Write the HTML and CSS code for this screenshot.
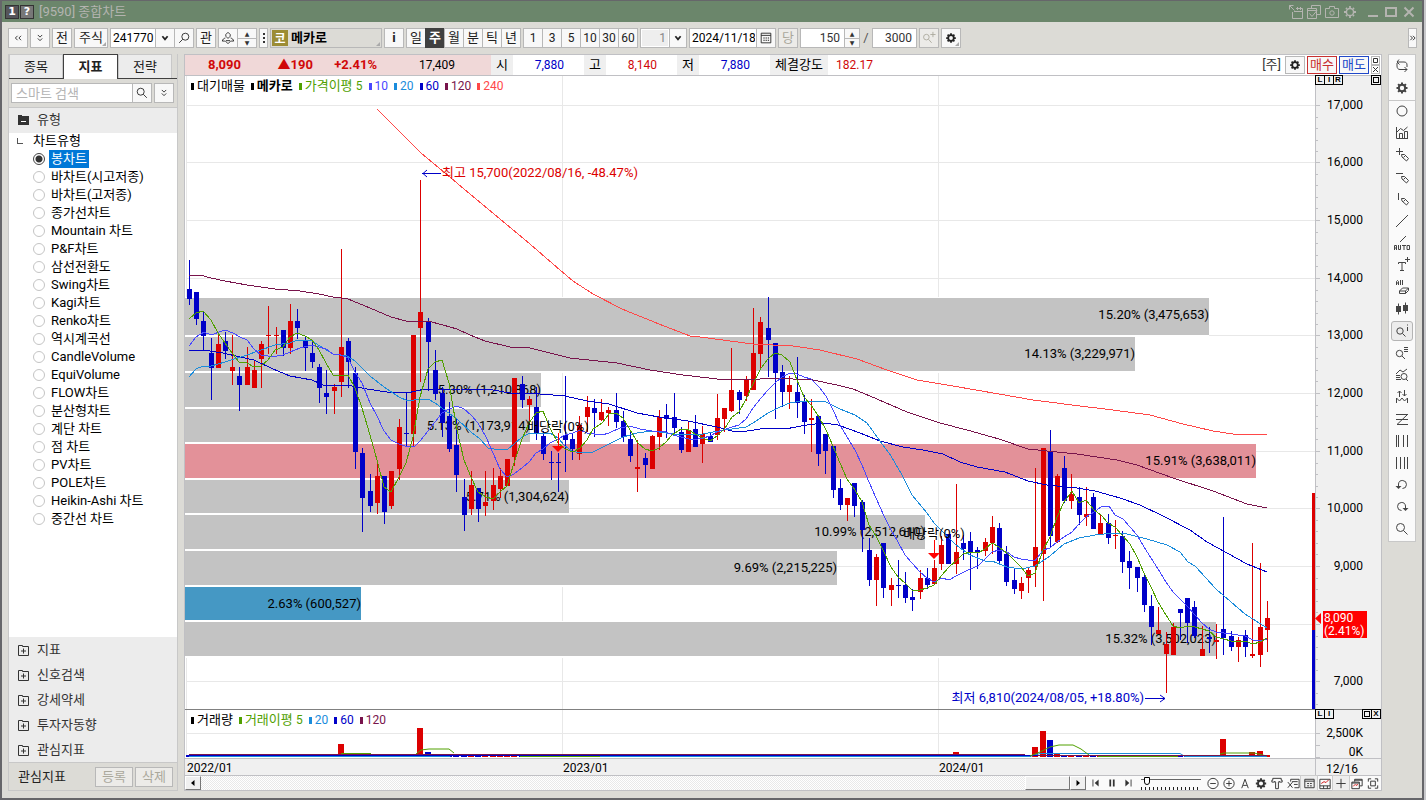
FILE: index.html
```html
<!DOCTYPE html>
<html lang="ko">
<head>
<meta charset="utf-8">
<title>[9590] 종합차트</title>
<link rel="stylesheet" href="styles.css">
</head>
<body>
<svg class="defs" aria-hidden="true">
  <symbol id="gear" viewBox="0 0 16 16"><circle cx="8" cy="8" r="3.2" fill="none" stroke="currentColor" stroke-width="2"/><path d="M8 2.500v2M8 11.500v2M2.500 8h2M11.500 8h2M4.100 4.100l1.400 1.400M10.500 10.500l1.400 1.400M4.100 11.900l1.400-1.400M10.500 5.500l1.400-1.400" stroke="currentColor" stroke-width="2" fill="none"/></symbol>
  <symbol id="gear-thin" viewBox="0 0 16 16"><circle cx="8" cy="8" r="3.600" fill="none" stroke="currentColor" stroke-width="1.500"/><path d="M8 2v2M8 12v2M2 8h2M12 8h2M4 4l1 1M11 11l1 1M4 12l1-1M11 5l1-1" stroke="currentColor" stroke-width="1.800" fill="none"/></symbol>
  <symbol id="search" viewBox="0 0 16 16"><path d="M9.500 9.500l4 4" class="ln"/><circle cx="6.500" cy="6.500" r="4" class="ln"/></symbol>
  <symbol id="search-left" viewBox="0 0 16 16"><path d="M6.500 9.500l-4 4" class="ln"/><circle cx="9.500" cy="6.500" r="4" class="ln"/></symbol>
  <symbol id="search-plus" viewBox="0 0 16 16"><path d="M7.500 9.500l3.500 4M12.500 1v6M9.500 4h6" class="ln"/><circle cx="5" cy="7" r="3.200" class="ln"/></symbol>
  <symbol id="dbl-down" viewBox="0 0 16 16"><path d="M5.500 4.500L8 7l2.500-2.500M5.500 8.500L8 11l2.500-2.500" class="ln"/></symbol>
  <symbol id="dbl-left" viewBox="0 0 16 16"><path d="M7.500 5.500L5 8l2.500 2.500M11.500 5.500L9 8l2.500 2.500" class="ln"/></symbol>
  <symbol id="dbl-right" viewBox="0 0 8 16"><path d="M1.500 5.500L4 8l-2.500 2.500M4.500 5.500L7 8l-2.500 2.500" class="ln"/></symbol>
  <symbol id="chev" viewBox="0 0 16 16"><path d="M5 6l3 3.500L11 6" fill="none" stroke="currentColor" stroke-width="2"/></symbol>
  <symbol id="person" viewBox="0 0 16 16"><path d="M8 1.500l2.500 2.500v2L8 8.500 5.500 6V4zM5 8c-2 .5-3 1.500-3.500 3.500h3M11 8c2 .5 3 1.500 3.500 3.500h-3M5 11.500l3 3 3-3M5.500 11h5" class="ln"/></symbol>
  <symbol id="calendar" viewBox="0 0 16 16"><path d="M2.500 2.500h11v11h-11zM2.500 5h11" class="ln"/><path d="M5 8h1.500M7.500 8H9M10 8h1.500M5 10.500h1.500M7.500 10.500H9M10 10.500h1.500" stroke="currentColor" stroke-width="1.200"/></symbol>
  <symbol id="folder-minus" viewBox="0 0 16 16"><path d="M3 3h4v1h7v9H3z" fill="currentColor"/><path d="M6 9.500h5" stroke="#fff"/></symbol>
  <symbol id="folder-plus" viewBox="0 0 16 16"><path d="M3.500 3.500h4v1h6v9h-10zM8.500 6.500v5M6 9h5" class="ln"/></symbol>
  <symbol id="export" viewBox="0 0 16 16"><path d="M4.500 8v6.500h10v-10H8M6 7.500h8M9.500 3v3M12.500 3v3M1.500 1.500l5 5M1.500 5.500v-4h4" class="lw"/></symbol>
  <symbol id="windows" viewBox="0 0 16 16"><path d="M1.500 4.500h9v10h-9zM5.500 4V1.500h9v9H11M1.500 6.500h9M3.500 9.500l2.500 3 5-6" class="lw"/></symbol>
  <symbol id="camera" viewBox="0 0 16 16"><path d="M2 4.500h3.500v-2h5v2H14.500v9H1.500v-9z" class="lw"/><circle cx="8" cy="9" r="2.200" class="lw"/></symbol>
  <symbol id="loop" viewBox="0 0 16 16"><path d="M5 1.500L3 4l2.500 2.500M3 4h7c2 0 3 1 3 3v2M3 5v3c0 2 1 3.500 3 3.500h7M10.500 9l2.500 2.500L10.500 14" class="ln"/></symbol>
  <symbol id="circle" viewBox="0 0 16 16"><circle cx="8" cy="8" r="5" class="ln"/></symbol>
  <symbol id="chartbars" viewBox="0 0 16 16"><path d="M2.500 2v11.500H14M5.500 13V8.500h3V13M10.500 13V6.500h3V13M2.500 7.500l4-4 3 2 4-3.500" class="ln"/></symbol>
  <symbol id="pen" viewBox="0 0 16 16"><path d="M7.500 7.500h3l4 4-2 2.500-4.500-4zM9.500 10.500l2-2" class="ln"/></symbol>
  <symbol id="pen-plus" viewBox="0 0 16 16"><path d="M5.500 1v7M2 4.500h7" class="ln"/><use href="#pen"/></symbol>
  <symbol id="pen-h" viewBox="0 0 16 16"><path d="M2 4.500h7" class="ln"/><use href="#pen"/></symbol>
  <symbol id="pen-v" viewBox="0 0 16 16"><path d="M4.500 2v7" class="ln"/><use href="#pen"/></symbol>
  <symbol id="line" viewBox="0 0 16 16"><path d="M2 14L14 2" class="ln"/></symbol>
  <symbol id="auto" viewBox="0 0 16 16"><path d="M6 7l6-6M.5 15v-4.500h2V15M.5 13h2M4.500 10v4.500h2V10M8 10.500h4M10 10.500V15M13 10.500h2.500v4H13z" class="ln"/></symbol>
  <symbol id="textplus" viewBox="0 0 16 16"><path d="M4.500 7V5.500h7V7M8 5.500v8M6 13.500h4M13.500 0v5M11 2.500h5" class="ln"/></symbol>
  <symbol id="all" viewBox="0 0 16 16"><path d="M2.500 6V2.500l1-1 1 1V6M2.500 4h2M6.500 1v5M8.500 1v5M5.500 12l3-3h6l-3 3zM5.500 12v2.500h6V12M11.500 14.500l3-3V9" class="ln"/></symbol>
  <symbol id="candles" viewBox="0 0 16 16"><path d="M2 5h5v6H2zM9 4h5v6H9z" fill="currentColor"/><path d="M4.500 2.500v11M11.500 1.500v11" class="ln"/></symbol>
  <symbol id="search-i" viewBox="0 0 16 16"><circle cx="6" cy="8" r="3.200" class="ln"/><path d="M8.500 10.500l3 3M13.500 4v4M13.500 1.500v1" class="ln"/></symbol>
  <symbol id="search-list" viewBox="0 0 16 16"><circle cx="5.500" cy="8.500" r="3.200" class="ln"/><path d="M8 11l3 3M10 2.500h4M10 4.500h4M10 6.500h4" class="ln"/></symbol>
  <symbol id="search-chart" viewBox="0 0 16 16"><path d="M2 7l4-4 3 2 4-3M2 8.500h4M2 10.500h4M2 12.500h5M12 12l2 2" class="ln"/><circle cx="10" cy="9.500" r="3" class="ln"/></symbol>
  <symbol id="peaks" viewBox="0 0 16 16"><path d="M2.500 14V9l3 3 2.500-3 2.500 3 3-3v5M5.500 8V2M3.500 4l2-2 2 2M10.500 1v6M8.500 5l2 2 2-2" class="ln"/></symbol>
  <symbol id="zlines" viewBox="0 0 16 16"><path d="M2 3.500h12M13.500 3.500L3 13.500M2 8.500h12M3 13.500h11" class="ln"/></symbol>
  <symbol id="vbars3" viewBox="0 0 16 16"><path d="M2.500 2v12M4.500 2v12M9.500 2v12M13.500 2v12" class="ln"/></symbol>
  <symbol id="vbars4" viewBox="0 0 16 16"><path d="M2.500 2v12M6.500 2v12M10.500 2v12M13.500 2v12" class="ln"/></symbol>
  <symbol id="undo" viewBox="0 0 16 16"><path d="M4.500 9V7a4 4 0 1 1 4 4.500" class="ln"/><path d="M1.500 9h6l-3 3z" fill="currentColor"/></symbol>
  <symbol id="redo" viewBox="0 0 16 16"><path d="M11.500 9V7a4 4 0 1 0-4 4.500" class="ln"/><path d="M8.500 9h6l-3 3z" fill="currentColor"/></symbol>
  <symbol id="minus-c" viewBox="0 0 16 16"><circle cx="8" cy="8" r="5.500" class="ln"/><path d="M5 8h6" class="ln"/></symbol>
  <symbol id="plus-c" viewBox="0 0 16 16"><circle cx="8" cy="8" r="5.500" class="ln"/><path d="M5 8h6M8 5v6" class="ln"/></symbol>
  <symbol id="letter-a" viewBox="0 0 16 16"><path d="M4.500 13L8 3.500l3.500 9.500M6 10h4" class="ln"/></symbol>
  <symbol id="tool" viewBox="0 0 16 16"><path d="M3.500 2.500h9v2h1v2h-3v-1l-1 1v7h-3v-7l-1-1v1h-3v-2h1z" class="ln"/></symbol>
  <symbol id="xlist" viewBox="0 0 16 16"><path d="M5.500 6V3.500h9v9h-5M7 6h6M9 9h4M2.500 6.500l5 6M7.500 6.500l-5 6" class="ln"/></symbol>
  <symbol id="table" viewBox="0 0 16 16"><path d="M3.500 3.500h10v9h-10zM3.500 5.500h10M6 8h2M9 8h2M6 10.500h2M9 10.500h2" class="ln"/></symbol>
  <symbol id="redchart" viewBox="0 0 16 16"><path d="M2.500 3.500h11v10h-11zM2.500 10.500h11M6.500 10.500v3M10.500 10.500v3" class="ln"/><path d="M4 8l3-2 2 1 3-3" stroke="#d01010" fill="none"/></symbol>
  <symbol id="plus" viewBox="0 0 16 16"><path d="M8 3v10M3 8h10" class="ln"/></symbol>
  <symbol id="stack" viewBox="0 0 16 16"><path d="M2.500 6.500h8v7h-8zM5.500 6V3.500h8v7H11M2.500 7.500h8M5.500 4.500h8" class="ln"/><path d="M4 11l2-2 1 1 2-1" stroke="#d01010" fill="none"/></symbol>
  <symbol id="expand" viewBox="0 0 16 16"><path d="M5.500 5.500h5v5h-5zM3 6V3h3M10 3h3v3M13 10v3h-3M6 13H3v-3" class="ln"/></symbol>
</svg>

<div class="window">
  <header class="titlebar">
    <span class="badge">1</span><span class="badge help">?</span>
    <span class="title">[9590] 종합차트</span>
    <span class="grow"></span>
    <button aria-label="내보내기"><svg><use href="#export"/></svg></button>
    <button aria-label="창 선택"><svg><use href="#windows"/></svg></button>
    <button aria-label="캡처"><svg><use href="#camera"/></svg></button>
    <button class="cfg" aria-label="설정"><svg><use href="#gear-thin"/></svg></button>
    <button aria-label="최소화"><i class="w-min"></i></button>
    <button aria-label="최대화"><i class="w-max"></i></button>
    <button aria-label="닫기"><svg><path d="M3.500 3.500l9 9M12.500 3.500l-9 9" stroke="currentColor" stroke-width="2"/></svg></button>
  </header>

  <div class="toolbar">
    <button class="b" aria-label="이전"><svg><use href="#dbl-left"/></svg></button>
    <button class="b" aria-label="펼치기"><svg><use href="#dbl-down"/></svg></button>
    <button class="b">전</button>
    <button class="b w34 corner">주식</button>
    <div class="group"><input class="w46" aria-label="종목코드" value="241770"><button class="b" aria-label="목록"><svg><use href="#chev"/></svg></button><button class="b" aria-label="검색"><svg><use href="#search-left"/></svg></button></div>
    <button class="b">관</button>
    <div class="group"><button class="b" aria-label="승계"><svg><use href="#person"/></svg></button><span class="spin w20"><button aria-label="위">▲</button><button aria-label="아래">▼</button></span></div>
    <button class="b w9" aria-label="더보기"><i class="dots"></i></button>
    <div class="name corner"><em>코</em><strong>메카로</strong></div>
    <button class="b"><strong>i</strong></button>
    <div class="group periods"><button class="b">일</button><button class="b on">주</button><button class="b">월</button><button class="b">분</button><button class="b">틱</button><button class="b">년</button></div>
    <div class="group n"><button class="b">1</button><button class="b">3</button><button class="b">5</button><button class="b">10</button><button class="b">30</button><button class="b">60</button></div>
    <div class="group"><input class="w30 off" aria-label="간격" value="1" disabled><button class="b w17" aria-label="간격 목록"><svg><use href="#chev"/></svg></button></div>
    <div class="group"><input class="w68" aria-label="날짜" value="2024/11/18"><button class="b" aria-label="달력"><svg><use href="#calendar"/></svg></button></div>
    <button class="b dim">당</button>
    <div class="group"><input class="w45 r" aria-label="표시 개수" value="150"><span class="spin"><button aria-label="증가">▲</button><button aria-label="감소">▼</button></span></div>
    <span class="slash">/</span>
    <input class="w45 r" aria-label="전체 개수" value="3000">
    <button class="b dim" aria-label="확대 검색"><svg><use href="#search-plus"/></svg></button>
    <button class="b corner" aria-label="차트 설정"><svg><use href="#gear"/></svg></button>
    <span class="grow"></span>
    <button class="b w9" aria-label="더 보기"><svg><use href="#dbl-right"/></svg></button>
  </div>

  <div class="main">
    <aside class="side">
      <nav class="tabs"><button>종목</button><button class="on">지표</button><button>전략</button></nav>
      <div class="find"><input placeholder="스마트 검색" aria-label="스마트 검색"><button class="b" aria-label="검색"><svg><use href="#search"/></svg></button><button class="b last" aria-label="펼치기"><svg><use href="#dbl-down"/></svg></button></div>
      <button class="fold top"><svg><use href="#folder-minus"/></svg>유형</button>
      <div class="list">
        <div class="root">차트유형</div>
        <label><input type="radio" name="t" checked><span>봉차트</span></label>
        <label><input type="radio" name="t"><span>바차트(시고저종)</span></label>
        <label><input type="radio" name="t"><span>바차트(고저종)</span></label>
        <label><input type="radio" name="t"><span>종가선차트</span></label>
        <label><input type="radio" name="t"><span>Mountain 차트</span></label>
        <label><input type="radio" name="t"><span>P&amp;F차트</span></label>
        <label><input type="radio" name="t"><span>삼선전환도</span></label>
        <label><input type="radio" name="t"><span>Swing차트</span></label>
        <label><input type="radio" name="t"><span>Kagi차트</span></label>
        <label><input type="radio" name="t"><span>Renko차트</span></label>
        <label><input type="radio" name="t"><span>역시계곡선</span></label>
        <label><input type="radio" name="t"><span>CandleVolume</span></label>
        <label><input type="radio" name="t"><span>EquiVolume</span></label>
        <label><input type="radio" name="t"><span>FLOW차트</span></label>
        <label><input type="radio" name="t"><span>분산형차트</span></label>
        <label><input type="radio" name="t"><span>계단 차트</span></label>
        <label><input type="radio" name="t"><span>점 차트</span></label>
        <label><input type="radio" name="t"><span>PV차트</span></label>
        <label><input type="radio" name="t"><span>POLE차트</span></label>
        <label><input type="radio" name="t"><span>Heikin-Ashi 차트</span></label>
        <label><input type="radio" name="t"><span>중간선 차트</span></label>
      </div>
      <button class="fold"><svg><use href="#folder-plus"/></svg>지표</button>
      <button class="fold"><svg><use href="#folder-plus"/></svg>신호검색</button>
      <button class="fold"><svg><use href="#folder-plus"/></svg>강세약세</button>
      <button class="fold"><svg><use href="#folder-plus"/></svg>투자자동향</button>
      <button class="fold"><svg><use href="#folder-plus"/></svg>관심지표</button>
      <div class="fav"><span>관심지표</span><button disabled>등록</button><button disabled>삭제</button></div>
    </aside>

    <section class="panel">
      <div class="quote">
        <div class="pink"><b class="q1">8,090</b><b class="q2">▲190</b><b class="q3">+2.41%</b><span class="q4">17,409</span></div>
        <span class="k">시</span><span class="v blue">7,880</span>
        <span class="k">고</span><span class="v red">8,140</span>
        <span class="k">저</span><span class="v blue">7,880</span>
        <span class="k long">체결강도</span><span class="v2 red">182.17</span>
        <span class="grow"></span>
        <span class="wk">[주]</span>
        <button class="b" aria-label="설정"><svg><use href="#gear"/></svg></button>
        <button class="buy">매수</button><button class="sell">매도</button>
        <span class="mini2"><button aria-label="최대화"><svg><path d="M1.500 1.500h4v4h-4z" class="ln"/></svg></button><button aria-label="닫기"><svg><path d="M1 1l5 5M6 1L1 6" class="ln"/></svg></button></span>
      </div>
      <div class="plot">
        <svg id="chart" viewBox="185 76 1196 690" preserveAspectRatio="xMinYMin meet" role="img" aria-label="메카로 주봉 차트"></svg>
        <div class="legend price"><span class="c0">대기매물</span><span class="c0"><b>메카로</b></span><span class="c5">가격이평 <u>5</u></span><span class="c10"><u>10</u></span><span class="c20"><u>20</u></span><span class="c60"><u>60</u></span><span class="c120"><u>120</u></span><span class="c240"><u>240</u></span></div>
        <div class="legend vol"><span class="c0">거래량</span><span class="c5">거래이평 <u>5</u></span><span class="c20"><u>20</u></span><span class="c60"><u>60</u></span><span class="c120"><u>120</u></span></div>
        <div class="lir p"><button>L</button><button>I</button><button>R</button><i></i><button aria-label="최대화"><s></s></button></div>
        <div class="lir q"><button>L</button><button>I</button><i></i><button aria-label="최대화"><s></s></button><button>X</button></div>
      </div>
      <div class="scroll">
        <button class="sb" aria-label="왼쪽"><svg viewBox="0 0 8 8"><path d="M5.500 1v6L2 4z"/></svg></button>
        <div class="track"><div class="thumb"></div></div>
        <button class="sb" aria-label="오른쪽"><svg viewBox="0 0 8 8"><path d="M2.500 1v6L6 4z"/></svg></button>
        <div class="play">
          <button aria-label="처음"><svg viewBox="0 0 16 16"><path d="M4.500 4v8" class="ln"/><path d="M11 4v8L6.500 8z" fill="currentColor"/></svg></button>
          <button aria-label="일시정지"><svg viewBox="0 0 16 16"><path d="M5 4h2v8H5zM9 4h2v8H9z" fill="currentColor"/></svg></button>
          <button aria-label="끝"><svg viewBox="0 0 16 16"><path d="M11.500 4v8" class="ln"/><path d="M5 4v8L9.500 8z" fill="currentColor"/></svg></button>
        </div>
        <input type="range" aria-label="속도" min="0" max="100" value="5">
        <div class="tools">
          <button aria-label="축소"><svg><use href="#minus-c"/></svg></button><button aria-label="확대"><svg><use href="#plus-c"/></svg></button><button aria-label="글자"><svg><use href="#letter-a"/></svg></button><button aria-label="설정"><svg><use href="#gear"/></svg></button><button aria-label="도구"><svg><use href="#tool"/></svg></button><button aria-label="삭제 목록"><svg><use href="#xlist"/></svg></button><button class="sel" aria-label="표"><svg><use href="#table"/></svg></button><button aria-label="차트"><svg><use href="#redchart"/></svg></button><button class="sel" aria-label="십자선"><svg><use href="#plus"/></svg></button><button aria-label="겹치기"><svg><use href="#stack"/></svg></button><button aria-label="전체화면"><svg><use href="#expand"/></svg></button>
        </div>
      </div>
    </section>

    <nav class="rail">
      <button aria-label="전환"><svg><use href="#loop"/></svg></button>
      <button aria-label="설정"><svg><use href="#gear"/></svg></button>
      <hr>
      <button aria-label="원"><svg><use href="#circle"/></svg></button>
      <button aria-label="차트"><svg><use href="#chartbars"/></svg></button>
      <button aria-label="십자선"><svg><use href="#pen-plus"/></svg></button>
      <button aria-label="수평선"><svg><use href="#pen-h"/></svg></button>
      <button aria-label="수직선"><svg><use href="#pen-v"/></svg></button>
      <button aria-label="추세선"><svg><use href="#line"/></svg></button>
      <button aria-label="자동 추세선"><svg><use href="#auto"/></svg></button>
      <button aria-label="텍스트"><svg><use href="#textplus"/></svg></button>
      <button aria-label="모두 지우기"><svg><use href="#all"/></svg></button>
      <button aria-label="봉"><svg><use href="#candles"/></svg></button>
      <button class="sel" aria-label="정보"><svg><use href="#search-i"/></svg></button>
      <button aria-label="목록"><svg><use href="#search-list"/></svg></button>
      <button aria-label="차트 검색"><svg><use href="#search-chart"/></svg></button>
      <button aria-label="고저"><svg><use href="#peaks"/></svg></button>
      <button aria-label="지그재그"><svg><use href="#zlines"/></svg></button>
      <button aria-label="구간"><svg><use href="#vbars3"/></svg></button>
      <button aria-label="등간격"><svg><use href="#vbars4"/></svg></button>
      <button aria-label="실행취소"><svg><use href="#undo"/></svg></button>
      <button aria-label="다시실행"><svg><use href="#redo"/></svg></button>
      <button aria-label="검색"><svg><use href="#search"/></svg></button>
    </nav>
  </div>
</div>
<script src="script.js"></script>
</body>
</html>
```
FILE: styles.css
```css
* { box-sizing: border-box; }
body { margin: 0; background: #c9c9cc; color: #000; font: 13px/16px Roboto, "Noto Sans CJK KR", sans-serif; }
button, input { font: inherit; color: inherit; margin: 0; padding: 0; border: 0; background: none; border-radius: 0; }
button { display: flex; align-items: center; justify-content: center; flex: none; white-space: nowrap; }
svg { width: 16px; height: 16px; flex: none; }
.defs { position: absolute; width: 0; height: 0; }
.ln { fill: none; stroke: currentColor; stroke-width: 1; }
.lw { fill: none; stroke: currentColor; stroke-width: 1; }
.grow { flex: 1; }
.red { color: #d00808; }
.blue { color: #0000c8; }

.window { display: flex; flex-direction: column; height: 100vh; margin-right: 2px; background: #dcdbd6; border: 2px solid #66666a; border-width: 1px 2px 2px; }
.titlebar { display: flex; align-items: center; height: 21px; padding: 0 4px 0 3px; background: #6b866b; color: #b4b4b0; flex: none; }
.badge { width: 14px; height: 14px; margin-right: 1px; background: #55555a; border: 1px solid #333; color: #fff; font: bold 11px/12px "DejaVu Sans", sans-serif; text-align: center; }
.help { background: #777; }
.title { margin-left: 4px; }
.titlebar button { width: 18px; }
.titlebar .cfg { margin-right: 5px; }
.w-min { width: 10px; height: 2px; margin-top: 9px; background: #b4b4b0; }
.w-max { width: 12px; height: 10px; border: 2px solid #b4b4b0; }

.toolbar { display: flex; align-items: center; gap: 2px; height: 32px; padding: 0 5px 0 6px; flex: none; }
.b { position: relative; width: 20px; height: 20px; background: #f8f8f8; border: 1px solid #b8b8b8; color: #222; overflow: hidden; }
.b svg { width: 14px; height: 14px; }
.b.w9 svg { width: 7px; }
.toolbar input { height: 20px; padding: 0 1px 0 2px; background: #fff; border: 1px solid #b8b8b8; font-size: 12px; }
.toolbar input.off { background: #eee; color: #888; text-align: right; padding-right: 3px; box-shadow: inset 0 0 0 1px #fff; }
.toolbar input.r { text-align: right; padding-right: 4px; color: #333; }
.group { display: flex; }
.group > * + * { margin-left: -1px; }
.n { font-size: 12px; }
.w9 { width: 9px; } .w17 { width: 18px; } .w20.spin { width: 20px; } .w30 { width: 30px; } .w34 { width: 34px; } .w45 { width: 45px; } .w46 { width: 46px; } .w68 { width: 68px; }
.on.b { background: #404040; border-color: #404040; color: #fff; font-weight: bold; }
.dim { background: #ecebe8; color: #aaa89c; }
.corner { position: relative; }
.corner::after { content: ""; position: absolute; right: 1px; bottom: 1px; border: 2px solid #aaa; border-top-color: transparent; border-left-color: transparent; }
.spin { display: flex; flex-direction: column; width: 16px; height: 20px; border: 1px solid #b8b8b8; background: #f8f8f8; }
.spin button { height: 9px; width: 100%; font: 6px/8px "DejaVu Sans", sans-serif; color: #333; }
.spin button + button { border-top: 1px solid #b8b8b8; }
.dots { width: 2px; height: 10px; background: repeating-linear-gradient(#333 0 2px, transparent 2px 4px); }
.name { display: flex; align-items: center; gap: 3px; width: 112px; height: 20px; border: 1px solid #b8b8b8; }
.name em { width: 16px; height: 16px; margin-left: 1px; background: #9c8c34; color: #fff; font: bold 12px/16px "Noto Sans CJK KR", sans-serif; text-align: center; }
.slash { width: 8px; text-align: center; color: #555; }

.main { display: flex; flex: 1; min-height: 0; padding: 0 6px 7px; }
.side { display: flex; flex-direction: column; width: 170px; margin-right: 6px; border: 1px solid #c8c8c8; border-top: 0; flex: none; color: #222; }
.tabs { display: flex; height: 25px; border-bottom: 1px solid #404040; }
.tabs button { width: 54px; background: #ececec; border: 1px solid #c8c8c8; border-bottom: 0; }
.tabs .on { width: 55px; height: 25px; background: #fff; border: 1px solid #404040; border-bottom: 0; font-weight: bold; }
.find { display: flex; padding: 4px 3px 4px 2px; }
.find input { flex: 1; min-width: 0; height: 20px; padding: 0 4px; background: #fff; border: 1px solid #b8b8b8; }
.find input::placeholder { color: #b4b4b4; }
.find .b { margin-left: -1px; }
.find .last { margin-left: 2px; }
.fold { justify-content: flex-start; gap: 6px; height: 25px; padding-left: 6px; background: #ececec; color: #333; }
.fold.top { border-top: 1px solid #c8c8c8; height: 26px; padding-bottom: 2px; }
.list { flex: 1; min-height: 0; overflow: hidden; background: #fff; color: #000; }
.root { position: relative; height: 17px; padding-left: 24px; line-height: 16px; }
.root::before { content: ""; position: absolute; left: 8px; top: 5px; width: 5px; height: 5px; border: 1px solid #555; border-top: 0; border-right: 0; }
.list label { display: flex; align-items: center; gap: 4px; height: 18px; padding-left: 24px; }
.list label span { padding: 0 2px 1px; line-height: 17px; }
.list input { appearance: none; width: 12px; height: 12px; border: 1px solid #c4c4c4; border-radius: 50%; background: #fff; }
.list input:checked { border-color: #444; background: radial-gradient(#333 0 3px, #fff 4px); }
.list input:checked + span { background: #0078d7; color: #fff; }
.fav { display: flex; align-items: center; gap: 2px; height: 28px; padding: 0 4px 0 9px; border-top: 1px solid #c8c8c8; }
.fav span { flex: 1; }
.fav button { width: 38px; height: 20px; border: 1px solid #b8b8b8; color: #aaa89c; background: #ecebe8; }

.panel { display: flex; flex-direction: column; flex: 1; min-width: 0; margin-right: 6px; border: 1px solid #c0c0c4; background: #fff; }
.quote { display: flex; align-items: center; height: 21px; border-bottom: 1px solid #c0c0c4; font-size: 12px; flex: none; }
.pink { display: flex; align-items: center; width: 306px; height: 20px; background: #f0d8d8; color: #d00808; text-align: right; }
.pink b { font-size: 13px; }
.q1 { width: 56px; } .q2 { width: 72px; } .q3 { width: 64px; } .q4 { width: 78px; color: #000; }
.k { width: 22px; line-height: 20px; background: #efefef; text-align: center; font-size: 13px; }
.long { width: 58px; }
.v { width: 71px; padding-right: 20px; text-align: right; }
.v2 { padding-left: 8px; }
.wk { margin-right: 4px; font-size: 13px; color: #333; }
.quote .b { height: 18px; }
.buy, .sell { width: 30px; height: 18px; margin-left: 2px; border: 1px solid #c83030; color: #c83030; background: #f8f8f8; font-size: 13px; }
.sell { border-color: #2048c8; color: #2048c8; }
.mini2 { display: flex; flex-direction: column; margin: 0 1px 0 2px; }
.mini2 button { width: 9px; height: 9px; border: 1px solid #b8b8b8; color: #333; }
.mini2 svg { width: 7px; height: 7px; }
.plot { position: relative; flex: 1; min-height: 0; }
#chart { display: block; width: 100%; height: 100%; font-size: 12px; }
#chart polyline { shape-rendering: crispEdges; }
.note { font-size: 13px; }
.legend { position: absolute; left: 6px; top: 2px; display: flex; gap: 6px; }
.legend.vol { top: 636px; }
.legend u { font-size: 12px; text-decoration: none; }
.legend span::before { content: ""; display: inline-block; width: 3px; height: 7px; margin-right: 3px; background: currentColor; }
.c5 { color: #50a000; } .c10 { color: #4848ff; } .c20 { color: #1a8cdc; } .c60 { color: #0000c8; } .c120 { color: #78144c; } .c240 { color: #ff4848; }
.lir { position: absolute; right: 1px; top: -1px; width: 65px; display: flex; }
.lir.q { top: 633px; }
.lir i { flex: 1; }
.lir button { width: 10px; height: 10px; margin-right: -1px; border: 1px solid #000; font: bold 8px/8px "Liberation Sans", sans-serif; }
.lir s { width: 6px; height: 6px; border: 1px solid #000; flex: none; }
.scroll { display: flex; height: 15px; border-top: 1px solid #c0c0c4; background: #fafafa; flex: none; color: #333; }
.sb { width: 16px; background: #f0f0f0; border: 1px solid #fff; border-right-color: #777; border-bottom-color: #777; color: #000; }
.sb svg { width: 8px; height: 8px; }
.track { flex: 1; display: flex; justify-content: flex-end; background: repeating-conic-gradient(#e9e9e9 0 25%, #fff 0 50%) 0 0 / 2px 2px; }
.thumb { width: 45px; background: #f0f0f0; border: 1px solid #fff; border-right-color: #777; border-bottom-color: #777; }
.play { display: flex; margin: 0 5px 0 2px; }
.play button, .tools button { width: 16px; height: 14px; }
.scroll input { appearance: none; width: 60px; height: 14px; background: linear-gradient(#666, #666) 0 3px / 100% 1px no-repeat, repeating-linear-gradient(90deg, #222 0 1px, transparent 1px 4px) 0 100% / 100% 3px no-repeat; }
.scroll input::-webkit-slider-thumb { appearance: none; width: 6px; height: 8px; margin-bottom: 4px; border: 1px solid #000; border-radius: 0 0 3px 3px; background: #fff; }
.tools { display: flex; margin: 0 0 0 4px; }
.tools .sel { background: #eee; box-shadow: 0 0 0 1px #ccc; }
.tools svg, .play svg { width: 16px; height: 14px; }
.tools svg { height: 15px; }

.rail { align-self: flex-start; width: 28px; padding-top: 1px; border: 1px solid #c8c8c8; background: #fafafa; flex: none; color: #444; }
.rail button { width: 22px; height: 20px; margin: 0 2px 2px; }
.rail hr { margin: 0; border: 0; border-top: 1px solid #c8c8c8; }
.rail .sel { border: 1px solid #b4b4b4; border-radius: 3px; background: #ececec; }
```
FILE: script.js
```js
const svg = document.getElementById('chart');
const RED = '#dc0000', BLUE = '#0000c8';
const out = [];
const rect = (x, y, w, h, c) => out.push(`<rect x="${x}" y="${y}" width="${w}" height="${h}" fill="${c}"/>`);
const text = (x, y, s, c = '#000', a = 'start', k = '') => out.push(`<text x="${x}" y="${y}" fill="${c}" text-anchor="${a}" class="${k}">${s}</text>`);
const line = (d, c) => out.push(`<path d="${d}" fill="none" stroke="${c}"/>`);

// Grid
const levels = [105, 162, 220, 278, 335, 393, 451, 508, 566, 624, 681];
levels.forEach(y => rect(187, y, 1128, 1, '#e8e8e8'));
[562, 938].forEach(x => rect(x, 76, 1, 681, '#e8e8e8'));
rect(186, 76, 1, 681, '#e8e8e8');
rect(187, 733, 1128, 1, '#e8e8e8');

// Volume profile: top, bottom, right edge, label, colour
const G = '#c3c3c3';
[[298, 335, 1209, '15.20% (3,475,653)', G], [337, 371, 1135, '14.13% (3,229,971)', G],
 [373, 407, 541, '5.30% (1,210,868)', G], [409, 442, 530, '5.13% (1,173,914)', G],
 [444, 478, 1256, '15.91% (3,638,011)', '#e39199'], [480, 513, 569, '5.71% (1,304,624)', G],
 [515, 549, 925, '10.99% (2,512,610)', G], [551, 585, 837, '9.69% (2,215,225)', G],
 [587, 620, 361, '2.63% (600,527)', '#4598c4'], [622, 656, 1216, '15.32% (3,502,023)', G]
].forEach(([t, b, r, s, c]) => {
  rect(185, t - 1, r - 185, b - t + 3, '#fff');
  rect(185, t, r - 185, b - t, c);
  text(r, t + 21, s, '#000', 'end', 'note');
});

// Weekly candles: high, body top, body bottom, low, direction
const candles = `260 289 299 305 B,292 292 319 325 B,312 321 336 351 B,338 353 368 400 B,335 344 368 368 R,332 341 351 359 B,335 367 371 385 R,367 376 385 411 B,347 367 385 385 R,361 370 388 388 R,341 344 359 388 R,306 335 336 354 R,327 335 336 354 R,330 330 348 356 B,304 321 348 354 R,309 321 328 339 B,336 341 348 371 B,341 353 362 368 B,364 367 388 403 B,370 393 397 414 B,384 387 391 414 R,249 347 382 397 R,338 341 362 388 B,367 373 452 469 B,448 453 498 532 B,474 491 506 512 B,462 476 503 514 R,476 476 512 524 B,471 471 506 509 R,419 427 469 480 R,393 433 434 446 B,335 335 434 446 R,180 312 328 382 R,318 321 342 391 B,350 370 394 400 B,387 393 423 437 B,402 416 449 452 B,418 445 475 492 B,479 497 515 531 B,471 485 509 515 R,488 488 509 522 B,471 502 506 516 R,468 485 501 510 R,468 476 489 498 R,459 459 486 486 R,378 378 457 466 R,376 384 400 408 B,396 399 405 424 R,387 407 433 440 B,431 436 454 460 B,451 462 463 480 B,453 462 463 492 B,376 435 440 472 B,433 439 449 460 B,416 425 454 460 R,396 407 417 432 R,399 408 413 437 B,399 412 420 421 R,407 410 413 426 R,393 410 422 428 B,411 421 437 442 B,430 439 456 462 B,440 467 469 492 R,453 458 465 478 B,435 436 469 469 R,410 417 437 450 R,404 415 419 438 B,393 417 428 436 B,427 432 450 453 B,422 430 452 452 R,415 429 447 447 B,426 434 444 463 R,432 436 442 442 B,394 418 435 440 R,408 408 419 432 R,348 390 411 412 R,390 392 400 414 B,376 380 396 401 R,308 353 390 390 R,317 322 354 370 R,297 328 340 377 B,343 343 373 419 B,365 372 392 407 B,376 385 392 409 R,357 392 403 418 B,395 402 422 434 B,399 418 420 452 R,416 416 454 466 B,434 434 451 474 B,446 446 490 498 B,479 488 505 510 B,498 498 505 521 R,483 483 506 517 B,500 502 530 552 B,538 550 580 586 B,554 557 580 606 R,543 543 588 598 B,578 585 590 606 R,560 585 586 598 B,572 585 598 603 B,589 597 600 611 B,570 578 592 599 R,568 578 585 589 B,560 568 584 584 R,536 545 564 570 R,534 534 564 564 B,484 552 564 574 R,535 543 549 560 B,532 541 552 590 B,547 550 552 569 B,538 542 551 556 R,516 527 543 554 R,523 528 561 564 B,546 554 582 586 B,568 580 589 594 B,577 583 591 599 R,568 570 578 593 R,468 547 567 587 R,448 448 554 601 R,430 451 536 548 B,474 476 542 543 R,456 468 501 503 B,474 494 501 509 R,487 497 515 525 B,487 514 517 526 R,493 497 529 529 B,515 523 534 534 R,514 523 538 544 B,520 535 536 549 R,531 536 562 573 B,551 561 568 589 B,567 567 578 592 B,574 577 605 612 B,595 606 627 645 B,607 630 634 634 R,632 644 654 693 R,623 627 655 655 R,609 609 613 640 B,598 598 623 643 B,601 607 636 638 B,626 649 656 656 R,627 637 639 653 B,624 640 642 659 R,517 629 638 655 B,631 636 647 651 B,637 640 647 662 R,630 635 647 657 B,543 654 656 658 R,563 627 655 667 R,601 618 630 652 R`
  .split(',').map(r => r.split(' '));
const xs = i => Math.floor(189.3 + i * 7.235);
candles.forEach(([h, t, b, l, d], i) => {
  const x = xs(i), c = d === 'R' ? RED : BLUE;
  rect(x, +h, 1, l - h, c);
  rect(x - 2, +t, 5, Math.max(1, b - t), c);
});

// Moving averages
const ma = {
  '#ff4848': '377,109 398,130 421,153 445,173 470,194 500,219 530,244 560,270 573,281 593,294 622,309 659,324 690,336 700,337 730,341 753,344 793,346 820,350 857,359 887,370 917,380 953,386 999,394 1033,400 1080,406 1113,410 1150,415 1183,424 1213,431 1233,434 1267,435',
  '#78144c': '189,275 200,275 211,278 225,281 247,285 275,289 300,291 319,294 333,297 348,299 370,308 391,317 406,321 428,321 443,325 457,329 470,335 485,341 510,347 530,348 570,358 617,363 650,370 683,375 717,379 747,380 773,378 813,380 837,385 853,389 870,396 907,412 940,423 967,430 999,439 1028,449 1047,451 1077,454 1117,460 1137,465 1173,478 1213,491 1247,504 1267,508',
  '#0000c8': '189,351 203,350 223,353 240,357 254,360 273,369 290,376 312,380 323,385 347,385 367,389 387,392 407,393 425,389 460,389 493,390 510,393 540,394 565,396 587,401 609,404 637,413 659,417 688,421 717,427 732,431 747,431 767,428 785,429 807,425 823,423 838,425 860,433 880,441 903,447 923,450 943,454 960,462 977,467 1005,472 1028,481 1047,485 1077,488 1095,491 1120,498 1140,505 1163,516 1190,530 1207,542 1227,553 1247,564 1267,572',
  '#1a8cdc': '189,377 196,369 203,366 211,366 225,362 247,355 261,350 275,345 290,343 297,340 312,341 323,348 333,354 347,356 355,361 370,376 384,387 399,397 408,401 420,399 428,399 435,403 442,408 450,414 457,419 471,432 480,439 488,448 500,450 508,449 514,444 522,437 530,433 550,433 558,438 565,446 572,451 580,453 593,452 609,444 623,437 637,433 652,431 673,434 688,435 703,434 724,430 732,429 746,427 753,423 768,413 782,406 790,403 803,401 826,402 840,409 855,415 867,423 880,441 891,456 902,475 912,495 927,513 934,523 942,531 956,545 970,555 985,561 992,561 1007,567 1021,569 1035,566 1050,556 1064,544 1079,538 1095,535 1113,533 1127,534 1147,539 1167,545 1180,552 1188,562 1195,566 1216,589 1231,602 1245,614 1267,628',
  '#4848ff': '189,346 196,337 204,332 211,335 225,330 233,333 240,337 247,340 254,349 261,355 268,356 277,356 283,355 290,352 300,348 312,345 319,347 326,349 333,354 341,355 348,358 355,372 362,383 370,403 377,416 384,431 391,440 399,444 408,447 415,446 420,441 428,431 435,422 442,413 449,409 457,406 464,409 471,415 478,423 486,437 493,453 500,469 507,477 514,474 522,468 529,462 536,453 543,449 550,443 558,439 565,435 573,433 580,430 587,433 602,435 609,433 620,428 630,426 640,429 652,431 666,432 673,435 681,437 693,440 703,438 710,436 717,432 732,427 739,425 746,419 753,408 761,398 768,390 775,383 782,377 790,373 797,374 804,377 811,379 819,387 826,396 833,410 840,425 847,437 855,450 862,465 869,482 876,498 884,516 891,530 898,542 905,555 912,563 920,572 927,578 934,582 942,578 949,580 956,576 970,569 978,566 985,559 992,552 999,550 1007,552 1014,557 1021,559 1035,561 1043,550 1050,548 1057,542 1064,537 1072,532 1079,524 1086,517 1094,512 1101,507 1109,506 1115,515 1123,519 1130,527 1137,535 1144,547 1151,558 1158,569 1166,582 1173,592 1180,599 1188,607 1195,615 1202,623 1209,629 1216,632 1224,633 1238,635 1245,636 1253,640 1260,641 1267,639',
  '#50a000': '189,319 196,313 203,311 211,320 218,333 225,343 232,353 239,362 247,363 254,367 261,366 268,360 275,350 283,347 290,337 297,333 305,336 312,340 319,350 326,363 333,375 348,375 355,388 362,408 370,435 377,460 384,487 391,492 399,477 406,463 413,437 420,397 428,369 435,362 442,360 449,383 457,430 464,460 471,477 478,492 486,497 493,499 500,492 507,486 514,463 522,439 529,423 536,413 543,411 550,428 558,443 565,449 573,452 580,448 587,440 593,429 602,423 609,414 616,413 623,418 630,430 638,443 645,449 652,451 659,448 666,442 672,435 681,429 687,429 695,434 703,438 710,441 717,436 725,428 732,417 739,412 746,399 753,384 761,368 768,359 775,353 782,355 790,362 797,380 804,397 811,405 819,417 826,430 833,446 840,463 847,479 855,490 862,502 869,525 876,536 884,552 891,567 898,577 905,583 912,590 920,590 927,588 934,585 942,575 949,567 956,561 963,554 970,552 978,553 985,549 992,543 999,547 1007,553 1014,560 1021,567 1028,576 1035,573 1043,550 1050,537 1057,517 1064,502 1072,491 1079,503 1086,500 1094,510 1101,515 1108,523 1115,527 1122,535 1130,544 1137,557 1144,573 1151,587 1158,602 1166,615 1173,626 1180,628 1188,626 1195,627 1202,629 1209,631 1216,637 1224,639 1231,641 1245,641 1253,644 1260,642 1267,638'
};
Object.entries(ma).forEach(([c, p]) => out.push(`<polyline points="${p}" fill="none" stroke="${c}"/>`));

// Annotations
line('M422 173.500h19M427 170l-4 3.500 4 3.500', BLUE);
text(442, 177, '최고 15,700(2022/08/16, -48.47%)', '#dc0000', 'start', 'note');
text(1144, 702, '최저 6,810(2024/08/05, +18.80%)', BLUE, 'end', 'note');
line('M1145 698.500h20M1160 695l5 3.500-5 3.500', BLUE);
[[558, 431, 446], [934, 538, 553]].forEach(([x, y, a]) => {
  text(x, y, '배당락(0%)', '#000', 'middle', 'note');
  rect(x, y + 2, 1, 14, '#ff0000');
  out.push(`<path d="M${x - 6} ${a}h12l-6 6z" fill="#ff0000"/>`);
});
rect(1312, 493, 3, 137, RED);
rect(1312, 630, 3, 79, BLUE);

// Volume
const vol = { 21: 13, 32: 29, 33: 5, 34: 3, 106: 5, 117: 10, 118: 26, 119: 17, 120: 4, 143: 18, 147: 5, 148: 6 };
candles.forEach((c, i) => {
  const h = vol[i] || 2;
  rect(xs(i) - 3, 757 - h, 6, h, c[4] === 'R' || i === 143 ? RED : BLUE);
});
line('M189 756.500H450V755.500H600V756.500H1030L1040 753.500H1180L1185 756.500H1267', '#1a8cdc');
line('M189 755.500H1267', BLUE);
line('M341 753.500h30M416 754l5-4 8-1h20l5 4M520 756.500h80M1030 756l10-4 10-5 9-2h14l8 4 8 6M1098 756.500h80M1220 754l4-1h30l13 3', '#50a000');
line('M189 754.500H1025M1038 755.500H1267', '#78144c');

// Axes
rect(1315, 76, 67, 699, '#f0f0f0');
rect(185, 758, 1197, 17, '#f0f0f0');
rect(1315, 76, 1, 699, '#c0c0c4');
rect(185, 709, 1197, 1, '#808080');
rect(185, 758, 1197, 1, '#c0c0c4');
levels.forEach((y, k) => {
  rect(1316, y, 4, 1, '#c0c0c4');
  for (let j = 1; j < 5; j++) if (y + j * 11.5 < 709) rect(1316, Math.round(y + j * 11.5), 2, 1, '#c0c0c4');
  if (k !== 9) text(1363, y + 4, (17 - k) + ',000', '#000', 'end');
});
[733, 745, 757].forEach(y => rect(1316, y, 4, 1, '#c0c0c4'));
text(1363, 737, '2,500K', '#000', 'end');
text(1363, 756, '0K', '#000', 'end');
rect(1323, 611, 44, 27, '#ff0000');
out.push('<path d="M1321 613v11l-6-5.500z" fill="#ff0000"/>');
text(1324, 622, '8,090', '#fff');
text(1324, 635, '(2.41%)', '#fff');
text(187, 772, '2022/01');
text(563, 772, '2023/01');
text(939, 772, '2024/01');
text(1326, 773, '12/16');
svg.innerHTML = out.join('');
```
